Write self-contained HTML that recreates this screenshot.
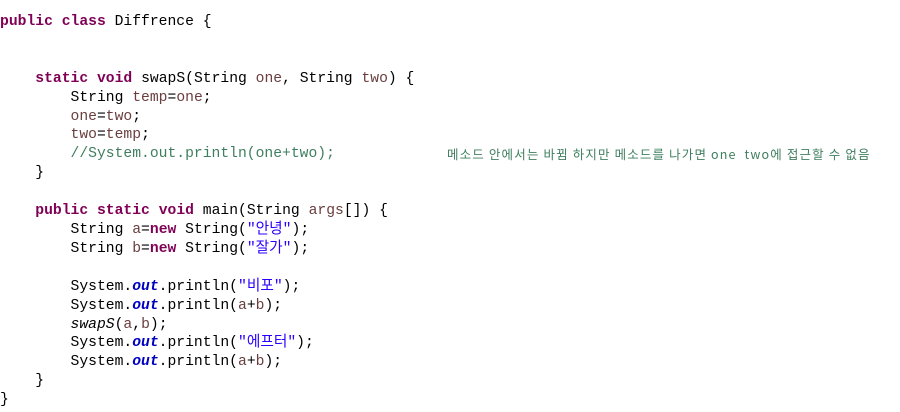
<!DOCTYPE html>
<html><head><meta charset="utf-8"><style>
html,body{margin:0;padding:0;background:#fff;width:900px;height:412px;overflow:hidden}
pre{margin:0;position:absolute;left:0;top:13px;font-family:"Liberation Mono","Noto Sans CJK KR",monospace;font-size:14.7px;line-height:18.9px;color:#000}
.k{color:#7f0055;font-weight:bold}
.v{color:#6a3e3e}
.s{color:#2a00ff}
.c{color:#3f7f5f}
.f{color:#0000c0;font-weight:bold;font-style:italic}
.i{font-style:italic}
.kr{position:absolute;left:447px;top:144px;font-family:"Noto Sans CJK KR","NanumGothic",sans-serif;font-size:12.5px;color:#3f7f5f;white-space:pre;letter-spacing:1.15px}
</style></head><body>
<pre><span class="k">public</span> <span class="k">class</span> Diffrence {


    <span class="k">static</span> <span class="k">void</span> swapS(String <span class="v">one</span>, String <span class="v">two</span>) {
        String <span class="v">temp</span>=<span class="v">one</span>;
        <span class="v">one</span>=<span class="v">two</span>;
        <span class="v">two</span>=<span class="v">temp</span>;
        <span class="c">//System.out.println(one+two);</span>
    }

    <span class="k">public</span> <span class="k">static</span> <span class="k">void</span> main(String <span class="v">args</span>[]) {
        String <span class="v">a</span>=<span class="k">new</span> String(<span class="s">"안녕"</span>);
        String <span class="v">b</span>=<span class="k">new</span> String(<span class="s">"잘가"</span>);

        System.<span class="f">out</span>.println(<span class="s">"비포"</span>);
        System.<span class="f">out</span>.println(<span class="v">a</span>+<span class="v">b</span>);
        <span class="i">swapS</span>(<span class="v">a</span>,<span class="v">b</span>);
        System.<span class="f">out</span>.println(<span class="s">"에프터"</span>);
        System.<span class="f">out</span>.println(<span class="v">a</span>+<span class="v">b</span>);
    }
}</pre>
<div class="kr">메소드 안에서는 바뀜 하지만 메소드를 나가면 one  two에 접근할 수 없음</div>
</body></html>
